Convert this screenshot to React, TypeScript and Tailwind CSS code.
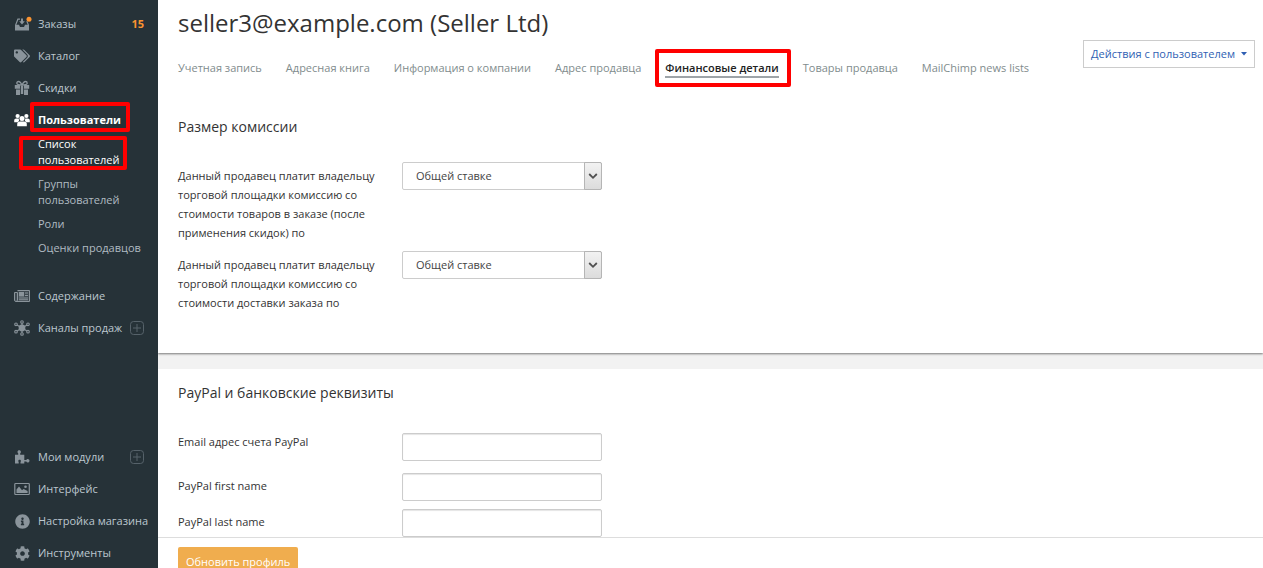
import type { ReactNode } from "react";
import { FaTags, FaInfoCircle, FaCog } from "react-icons/fa";

const Svg = ({ children }: { children: ReactNode }) => (
  <svg viewBox="0 0 16 16" className="size-4 overflow-visible" fill="currentColor" aria-hidden="true">
    {children}
  </svg>
);

const OrdersIcon = () => (
  <Svg>
    <path d="M3.500 2.500H6v1.200H4.400L2.300 8.800H5l1 2.200h4l1-2.200h2.700l-1.500-3.600h1.300L15 9v5.500H1V9z" />
    <path d="M7 2.500h2v2.700h1.800L8 8.500 5.200 5.200H7z" />
    <circle cx="15" cy="3.300" r="2.500" fill="#fb9431" />
  </Svg>
);

const GiftIcon = () => (
  <Svg>
    <path
      d="M8 5C6.800 2.500 5.800 1.500 4.600 1.500 3.500 1.500 2.800 2.300 2.800 3.200 2.800 4.500 4.500 5 8 5zM8 5c1.200-2.500 2.200-3.500 3.400-3.500 1.100 0 1.800.8 1.800 1.700C13.200 4.500 11.500 5 8 5z"
      fill="none"
      stroke="currentColor"
      strokeWidth="1.300"
    />
    <path d="M.8 5H6v3.800H.8zM10 5h5.200v3.800H10zM2 9.500h4v5.500H2zM10 9.500h4v5.500h-4zM6.800 5.500h2.400V14H6.800z" />
  </Svg>
);

const UsersIcon = () => (
  <Svg>
    <circle cx="3.600" cy="4" r="2.100" />
    <circle cx="12.400" cy="4" r="2.100" />
    <path d="M.2 10.200V8.600C.2 7.300 1 6.600 2.400 6.600h2.300l.4 2L4 10.200zM15.800 10.200V8.600c0-1.300-.8-2-2.200-2h-2.300l-.4 2L12 10.200z" />
    <circle cx="8" cy="6.400" r="2.500" />
    <path d="M3.200 14.200V12c0-1.600 1.100-2.500 2.700-2.500h4.200c1.600 0 2.700.9 2.700 2.500v2.200z" />
  </Svg>
);

const NewsIcon = () => (
  <Svg>
    <path d="M3.500 2.500h12v11H2A1.500 1.500 0 0 1 .5 12V4.500h3V12a1 1 0 0 1-1 1" fill="currentColor" fillOpacity=".25" stroke="currentColor" />
    <path d="M5 4h5v4.500H5zM11 4.500h3v1h-3zM11 7h3v1h-3zM5 9.500h9v1H5zM5 11.300h9v1H5z" />
  </Svg>
);

const HubIcon = () => (
  <Svg>
    <circle cx="8" cy="8" r="3.400" />
    <path d="M8 8V2M8 8v6M8 8 2.500 4.700M8 8l5.500-3.300M8 8l-5.500 3.300M8 8l5.500 3.300" stroke="currentColor" strokeWidth="1.200" />
    <g fill="#263238" stroke="currentColor" strokeWidth="1.100">
      <circle cx="8" cy="2" r="1.300" />
      <circle cx="8" cy="14" r="1.300" />
      <circle cx="2" cy="4.300" r="1.300" />
      <circle cx="14" cy="4.300" r="1.300" />
      <circle cx="2" cy="11.700" r="1.300" />
      <circle cx="14" cy="11.700" r="1.300" />
    </g>
  </Svg>
);

const PuzzleIcon = () => (
  <Svg>
    <path d="M1 5.800h3.200V4.300C3.700 3.900 3.500 3.500 3.500 2.900c0-1 .7-1.700 1.700-1.700s1.700.7 1.700 1.700c0 .6-.2 1-.7 1.400v1.500H10.300v5.200h2c.3-.7.800-1.100 1.400-1.100 1 0 1.800.8 1.800 1.800s-.8 1.800-1.800 1.800c-.6 0-1.100-.4-1.400-1h-2v2H6.500v-1.600c.3-.3.400-.5.400-.9 0-.8-.6-1.300-1.300-1.300s-1.300.5-1.300 1.300c0 .4.100.6.400.9v1.600H1z" />
  </Svg>
);

const PictureIcon = () => (
  <Svg>
    <rect x=".8" y="2.500" width="14.500" height="11" rx=".8" fill="none" stroke="currentColor" strokeWidth="1.200" />
    <path d="M2.500 12V8.500L5 5.500l3 3.700 1.600-1.300 4 2.100v2z" />
    <circle cx="11.500" cy="5.800" r="1.300" />
  </Svg>
);

const PlusBox = () => (
  <svg viewBox="0 0 14 14" className="size-3.5" fill="none" stroke="#56626a" aria-hidden="true">
    <rect x=".5" y=".5" width="13" height="13" rx="3" />
    <path d="M7 3v8M3 7h8" />
  </svg>
);

type NavItem = { label: string; icon: ReactNode; count?: number; plus?: boolean; active?: boolean };

const NavLink = ({ label, icon, count, plus, active }: NavItem) => (
  <a
    href="#"
    className={`relative flex h-8 items-center px-3.5 whitespace-nowrap ${
      active ? "font-bold text-white" : "text-[#bcc7cf]"
    }`}
  >
    <span className={`mr-2 flex w-4 shrink-0 justify-center ${active ? "text-white" : "text-[#8a949b]"}`}>{icon}</span>
    <span>{label}</span>
    {count !== undefined && <span className="ml-auto font-bold text-[#fb9431]">{count}</span>}
    {plus && (
      <span className="ml-auto">
        <PlusBox />
      </span>
    )}
    {active && <span className="absolute -top-0.5 right-7 bottom-1 left-[30px] rounded-xs border-4 border-[#ff0000]" />}
  </a>
);

const topItems: NavItem[] = [
  { label: "Заказы", icon: <OrdersIcon />, count: 15 },
  { label: "Каталог", icon: <FaTags className="size-4" /> },
  { label: "Скидки", icon: <GiftIcon /> },
  { label: "Пользователи", icon: <UsersIcon />, active: true },
];

const subItems = ["Список пользователей", "Группы пользователей", "Роли", "Оценки продавцов"];

const midItems: NavItem[] = [
  { label: "Содержание", icon: <NewsIcon /> },
  { label: "Каналы продаж", icon: <HubIcon />, plus: true },
];

const bottomItems: NavItem[] = [
  { label: "Мои модули", icon: <PuzzleIcon />, plus: true },
  { label: "Интерфейс", icon: <PictureIcon /> },
  { label: "Настройка магазина", icon: <FaInfoCircle className="size-[15px]" /> },
  { label: "Инструменты", icon: <FaCog className="size-[15px]" /> },
];

const tabs = [
  "Учетная запись",
  "Адресная книга",
  "Информация о компании",
  "Адрес продавца",
  "Финансовые детали",
  "Товары продавца",
  "MailChimp news lists",
];
const activeTab = "Финансовые детали";

const RateField = ({ id, label }: { id: string; label: string }) => (
  <div className="flex items-start">
    <label htmlFor={id} className="w-56 shrink-0 pt-1 pr-5 leading-[19px]">
      {label}
    </label>
    <div className="relative w-[200px]">
      <select
        id={id}
        className="h-7 w-full appearance-none rounded-xs border border-[#cccccc] bg-white pl-[13px] text-[#444444]"
      >
        <option>Общей ставке</option>
      </select>
      <span className="pointer-events-none absolute inset-y-0 right-0 flex w-[18px] items-center justify-center rounded-r-xs border border-[#b5b5b5] bg-linear-to-b from-[#f2f2f2] to-[#dcdcdc]">
        <svg viewBox="0 0 10 10" className="size-2.5" fill="none" stroke="#505050" strokeWidth="1.800" aria-hidden="true">
          <path d="M1.200 3 5 6.800 8.800 3" />
        </svg>
      </span>
    </div>
  </div>
);

const TextField = ({ id, label, tall }: { id: string; label: string; tall?: boolean }) => (
  <div className={`flex ${tall ? "h-8 items-end" : "items-start"}`}>
    <label htmlFor={id} className="w-56 shrink-0 self-start pt-[3px] pr-5 leading-[19px]">
      {label}
    </label>
    <input
      id={id}
      type="text"
      className="h-7 w-[200px] rounded-xs border border-[#cccccc] bg-white px-2 shadow-[inset_0_1px_1px_#e5e5e5]"
    />
  </div>
);

export default function App() {
  return (
    <div className="flex h-screen overflow-hidden bg-white font-['Open_Sans','Noto_Sans',sans-serif] text-[11px] text-[#333333]">
      <aside className="flex w-[158px] shrink-0 flex-col bg-[#263238] pt-2">
        <nav className="-mb-px flex flex-1 flex-col">
          {topItems.map((item) => (
            <NavLink key={item.label} {...item} />
          ))}
          <ul className="flex flex-col gap-2 pr-3 pb-6 pl-[38px] leading-4">
            {subItems.map((label, i) => (
              <li key={label} className="relative">
                <a href="#" className={i === 0 ? "block text-white" : "block text-[#b0bbc2]"}>
                  {label}
                </a>
                {i === 0 && (
                  <span className="absolute top-0 right-[19px] -bottom-0.5 -left-[19px] rounded-xs border-4 border-[#ff0000]" />
                )}
              </li>
            ))}
          </ul>
          {midItems.map((item) => (
            <NavLink key={item.label} {...item} />
          ))}
          <div className="mt-auto">
            {bottomItems.map((item) => (
              <NavLink key={item.label} {...item} />
            ))}
          </div>
        </nav>
      </aside>

      <div className="flex min-w-0 flex-1 flex-col">
        <main className="min-h-0 flex-1 overflow-hidden bg-[#f2f2f2]">
          <section className="bg-white px-5 pb-[41px] shadow-[0_1px_2px_#777777]">
            <header className="-mr-3 flex items-start justify-between">
              <div>
                <h1 className="pt-[7px] text-2xl leading-8">seller3@example.com (Seller Ltd)</h1>
                <nav className="flex gap-6 pt-[19px] whitespace-nowrap text-[#7f8c8d]">
                  {tabs.map((tab) =>
                    tab === activeTab ? (
                      <a key={tab} href="#" className="relative font-semibold text-[#222222]">
                        <span className="block h-5 border-b-2 border-[#9ea4a8] leading-5">{tab}</span>
                        <span className="absolute -top-[9px] -right-3 -bottom-[9px] -left-2.5 rounded-xs border-4 border-[#ff0000]" />
                      </a>
                    ) : (
                      <a key={tab} href="#" className="leading-5">
                        {tab}
                      </a>
                    ),
                  )}
                </nav>
              </div>
              <button
                type="button"
                className="mt-10 flex h-7 items-center gap-1.5 border border-[#cccccc] bg-white px-[7px] whitespace-nowrap text-[#2f5fb3]"
              >
                Действия с пользователем
                <svg viewBox="0 0 6 4" className="h-1 w-1.5" fill="currentColor" aria-hidden="true">
                  <path d="M0 0h6L3 3.500z" />
                </svg>
              </button>
            </header>
            <h2 className="pt-[39px] text-sm leading-5">Размер комиссии</h2>
            <div className="flex flex-col gap-[9px] pt-[25px]">
              <RateField
                id="goods-rate"
                label="Данный продавец платит владельцу торговой площадки комиссию со стоимости товаров в заказе (после применения скидок) по"
              />
              <RateField
                id="shipping-rate"
                label="Данный продавец платит владельцу торговой площадки комиссию со стоимости доставки заказа по"
              />
            </div>
          </section>

          <section className="mt-4 bg-white px-5 pb-10">
            <h2 className="pt-3.5 text-sm leading-5">PayPal и банковские реквизиты</h2>
            <div className="flex flex-col gap-2 pt-[26px]">
              <div className="pb-1">
                <TextField id="paypal-email" label="Email адрес счета PayPal" tall />
              </div>
              <TextField id="paypal-first" label="PayPal first name" />
              <TextField id="paypal-last" label="PayPal last name" />
            </div>
          </section>
        </main>
        <footer className="h-[31px] shrink-0 overflow-hidden border-t border-[#dddddd] bg-white px-5 pt-[9px]">
          <button type="button" className="h-[30px] rounded-xs bg-[#f0ad4e] px-2 text-white">
            Обновить профиль
          </button>
        </footer>
      </div>
    </div>
  );
}
